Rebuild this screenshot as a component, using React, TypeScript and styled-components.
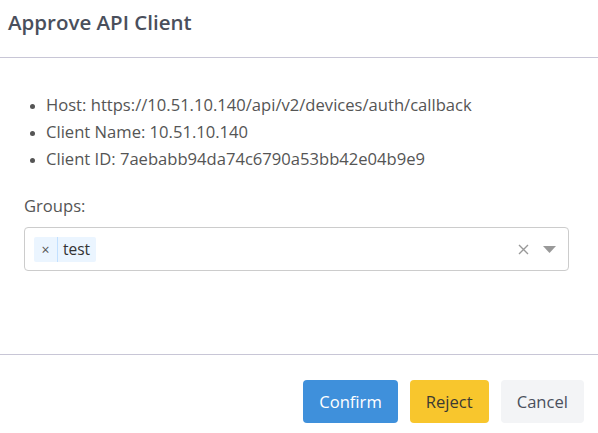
import React from 'react';
import styled, { createGlobalStyle } from 'styled-components';

const GlobalStyle = createGlobalStyle`
  html, body {
    margin: 0;
    padding: 0;
    background: #fff;
  }
  body {
    font-family: "Segoe UI", "Open Sans", "Noto Sans", sans-serif;
  }
`;

const Modal = styled.div`
  width: 598px;
  height: 433px;
  display: flex;
  flex-direction: column;
  box-sizing: border-box;
`;

const Header = styled.header`
  height: 58px;
  box-sizing: border-box;
  padding: 0 8px;
  display: flex;
  align-items: center;
  border-bottom: 1px solid #c8c6d6;
`;

const Title = styled.h2`
  margin: 0 0 13px;
  font-size: 20.5px;
  font-weight: 600;
  color: #4a4f5c;
`;

const Body = styled.div`
  flex: 1;
  padding: 33px 29px 0 24px;
`;

const InfoList = styled.ul`
  margin: 0;
  padding-left: 22px;
  color: #555;
  font-size: 16.6px;
  line-height: 27px;

  li::marker {
    font-size: 13px;
  }
`;

const Label = styled.div`
  margin-top: 23px;
  font-size: 16.6px;
  line-height: 22px;
  color: #555;
`;

const Select = styled.div`
  margin-top: 10px;
  height: 44px;
  box-sizing: border-box;
  border: 1px solid #ccc;
  border-radius: 4px;
  display: flex;
  align-items: center;
  padding: 0 12px 0 9px;
`;

const Tags = styled.div`
  flex: 1;
  display: flex;
  gap: 6px;
`;

const Tag = styled.span`
  display: inline-flex;
  align-items: stretch;
  height: 25px;
  background: #ebf5ff;
  border-radius: 2px;
  font-size: 15.5px;
  color: #333;
`;

const TagRemove = styled.span`
  width: 23px;
  display: flex;
  align-items: center;
  justify-content: center;
  border-right: 1px solid #c2e0ff;
  color: #555;
  font-size: 14px;
`;

const TagText = styled.span`
  display: flex;
  align-items: center;
  padding: 0 6px 0 5px;
`;

const Indicators = styled.div`
  display: flex;
  align-items: center;
  gap: 14px;
  color: #999;
`;

const Footer = styled.footer`
  border-top: 1px solid #c8c6d6;
  padding: 25px 14px 10px;
  display: flex;
  justify-content: flex-end;
  gap: 12px;
`;

const Button = styled.button<{ $variant: 'primary' | 'warning' | 'light' }>`
  height: 43px;
  border: none;
  border-radius: 4px;
  padding: 0 16px;
  font-family: inherit;
  font-size: 16.6px;
  cursor: pointer;
  background: ${({ $variant }) =>
    $variant === 'primary' ? '#3f90db' : $variant === 'warning' ? '#f8c62d' : '#f3f4f6'};
  color: ${({ $variant }) =>
    $variant === 'primary' ? '#fff' : $variant === 'warning' ? '#3c3a33' : '#4a4f5c'};
`;

const App: React.FC = () => {
  return (
    <Modal>
      <GlobalStyle />
      <Header>
        <Title>Approve API Client</Title>
      </Header>
      <Body>
        <InfoList>
          <li>Host: https://10.51.10.140/api/v2/devices/auth/callback</li>
          <li>Client Name: 10.51.10.140</li>
          <li>Client ID: 7aebabb94da74c6790a53bb42e04b9e9</li>
        </InfoList>
        <Label>Groups:</Label>
        <Select>
          <Tags>
            <Tag>
              <TagRemove>×</TagRemove>
              <TagText>test</TagText>
            </Tag>
          </Tags>
          <Indicators>
            <svg width="11" height="11" viewBox="0 0 11 11">
              <path d="M1 1 L10 10 M10 1 L1 10" stroke="#999" strokeWidth="1.4" />
            </svg>
            <svg width="13" height="7" viewBox="0 0 13 7">
              <path d="M0 0 H13 L6.5 7 Z" fill="#999" />
            </svg>
          </Indicators>
        </Select>
      </Body>
      <Footer>
        <Button $variant="primary">Confirm</Button>
        <Button $variant="warning">Reject</Button>
        <Button $variant="light">Cancel</Button>
      </Footer>
    </Modal>
  );
};

export default App;
